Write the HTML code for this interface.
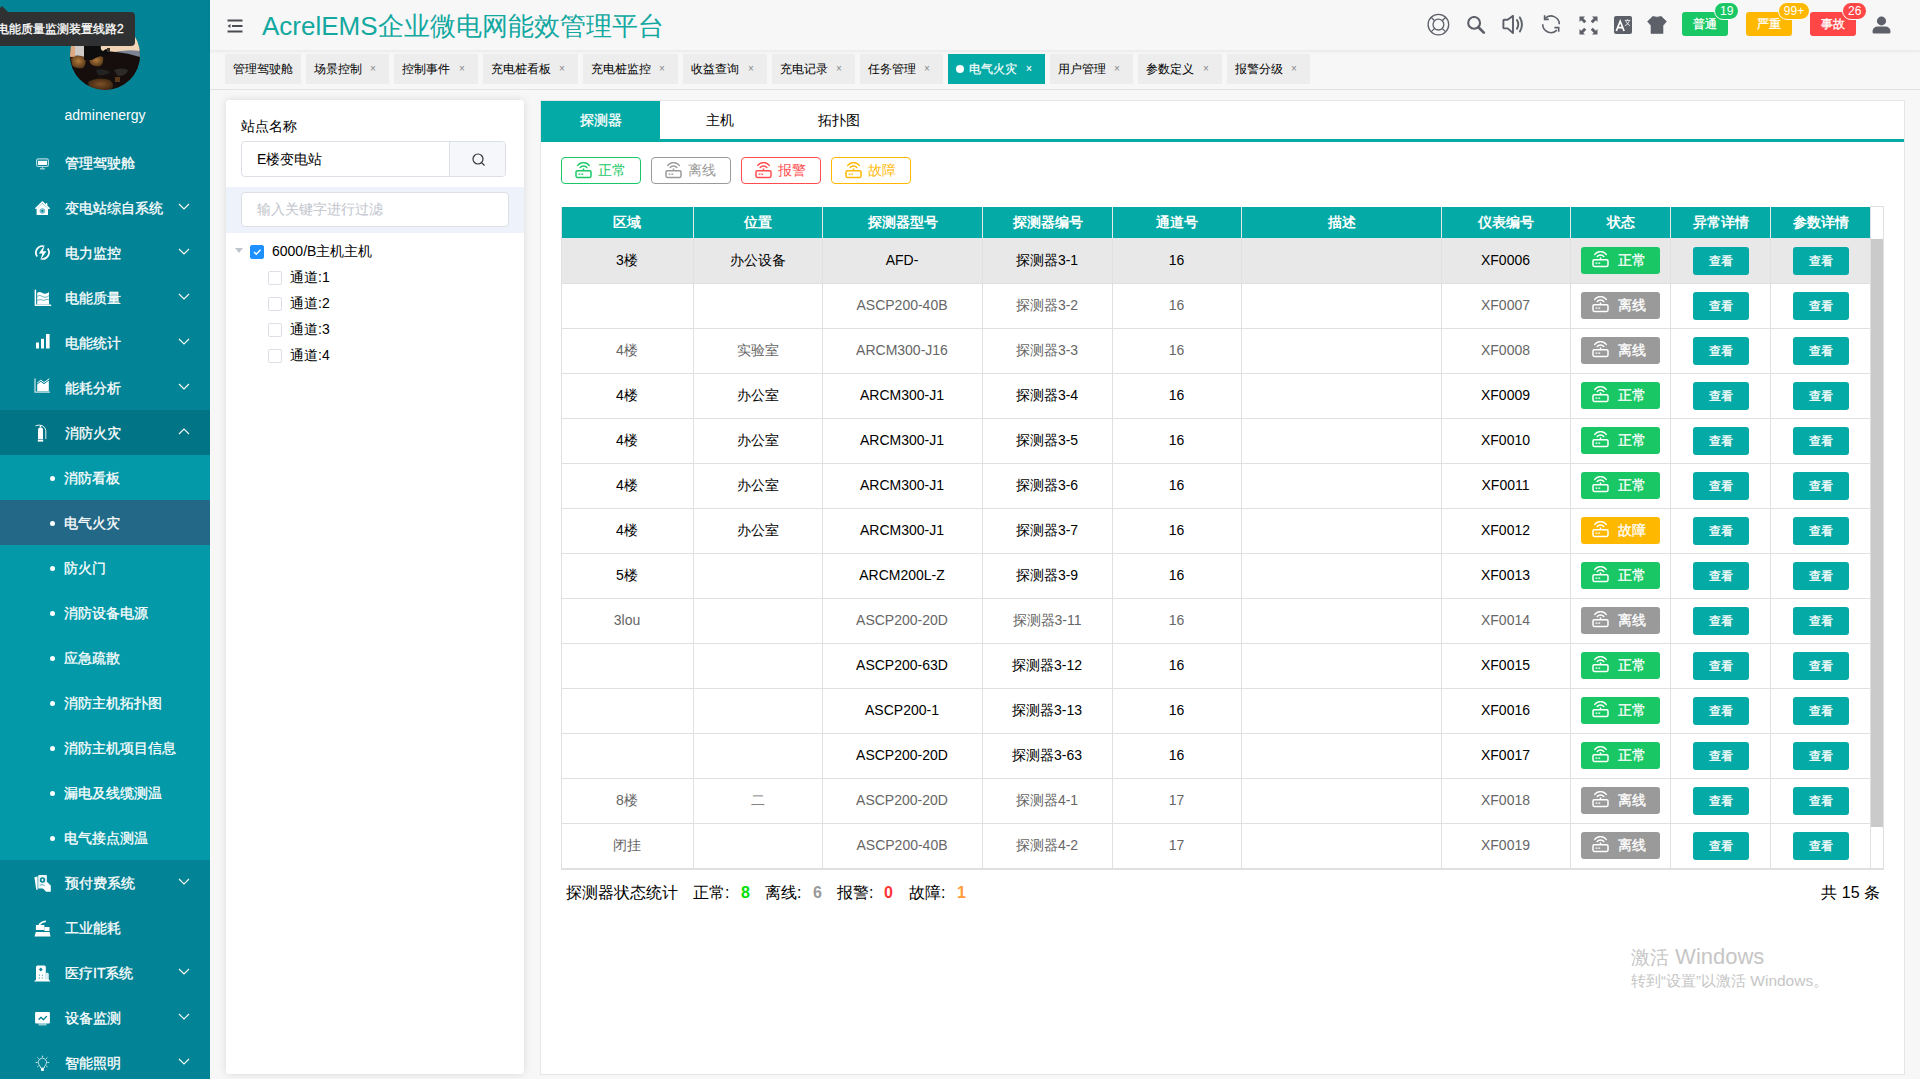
<!DOCTYPE html>
<html><head><meta charset="utf-8">
<style>
*{box-sizing:border-box;margin:0;padding:0}
html,body{width:1920px;height:1079px;overflow:hidden;background:#f7f7f7;font-family:"Liberation Sans",sans-serif;color:#000}
i{font-style:normal}
#side{position:absolute;left:0;top:0;width:210px;height:1079px;background:#028396;color:#fff;overflow:hidden}
.mi{position:absolute;left:0;width:210px;height:45px;line-height:45px;font-size:14px;color:#fff}
.mi .t{position:absolute;left:65px;top:1px;-webkit-text-stroke:0.3px #fff}
.mi .ic{position:absolute;left:34px;top:14px;width:17px;height:18px;line-height:0}
.mi .ic svg{overflow:visible}
.mi .chev{position:absolute;left:178px;top:18px}
.sub .t{left:64px}
.sub .dot{position:absolute;left:50px;top:21px;width:5px;height:5px;border-radius:50%;background:#fff}
#avatar{position:absolute;left:70px;top:20px;width:70px;height:70px;border-radius:50%;overflow:hidden;
 background:linear-gradient(180deg,#d9b89a 0%,#c59a7b 30%,#3a2a20 45%,#2a1e18 70%,#4a3322 100%)}
#uname{position:absolute;left:0;width:210px;top:106px;text-align:center;font-size:14px;line-height:18px;color:#fff}
#tip{position:absolute;left:0;top:12px;width:135px;height:34px;background:#303133;border-radius:0 4px 4px 0;color:#fff;font-size:12px;line-height:34px;white-space:nowrap;overflow:hidden;text-indent:-3px;-webkit-text-stroke:.3px #fff}
#tiparr{position:absolute;left:-4px;top:6px;width:0;height:0;border-left:6px solid transparent;border-right:6px solid transparent;border-bottom:6px solid #303133}

#hdr{position:absolute;left:210px;top:0;width:1710px;height:51px;background:#f7f7f7;border-bottom:1px solid #ececec;box-shadow:0 1px 3px rgba(0,0,0,.05);z-index:2}
#ham{position:absolute;left:17px;top:19px}
#title{position:absolute;left:52px;top:9px;font-size:26px;line-height:34px;color:#13a8a0;white-space:nowrap}
.hi{position:absolute;top:13px;line-height:0}
.bdg{position:absolute;top:12px;width:46px;height:24px;border-radius:3px;color:#fff;font-size:12px;line-height:24px;text-align:center;-webkit-text-stroke:.3px #fff}
.cnt{position:absolute;top:2px;height:18px;border-radius:9px;border:1px solid #fff;color:#fff;font-size:12px;line-height:16px;text-align:center;padding:0 5px}

#tabs{position:absolute;left:210px;top:50px;width:1710px;height:40px;background:#f7f7f7;border-bottom:1px solid #e2e2e2}
.tb{position:absolute;top:4px;height:30px;line-height:30px;background:#ededed;font-size:12px;color:#000;white-space:nowrap}
.tb .tt{position:absolute;top:0}
.tb .x{position:absolute;top:0;font-size:10px;color:#888}
.tb.on{background:#04aaa5;color:#fff;-webkit-text-stroke:.2px #fff}
.tb.on .x{color:#fff}
.tb .bd{position:absolute;left:8px;top:11px;width:8px;height:8px;border-radius:50%;background:#fff}

#lp{position:absolute;left:226px;top:100px;width:298px;height:974px;background:#fff;border-radius:3px;box-shadow:0 0 8px rgba(0,0,0,.12)}
#lp .lbl{position:absolute;left:15px;top:17px;font-size:14px;line-height:18px}
#lp .inp{position:absolute;left:15px;top:41px;width:265px;height:36px;border:1px solid #dcdfe6;border-radius:4px;overflow:hidden}
#lp .inp .v{position:absolute;left:15px;top:0;line-height:34px;font-size:14px;color:#000}
#lp .inp .btn{position:absolute;left:207px;top:0;width:58px;height:34px;background:#f5f7fa;border-left:1px solid #dcdfe6}
#lp .flt{position:absolute;left:0;top:87px;width:298px;height:46px;background:#eef3fb}
#lp .flt .fi{position:absolute;left:15px;top:5px;width:268px;height:35px;background:#fff;border:1px solid #dcdfe6;border-radius:4px;font-size:14px;line-height:33px;color:#c0c4cc;padding-left:15px}
.tree{position:absolute;font-size:14px;line-height:18px;white-space:nowrap}
.cb{position:absolute;width:14px;height:14px;border:1px solid #dcdfe6;border-radius:2px;background:#fff}

#rp{position:absolute;left:540px;top:100px;width:1365px;height:975px;background:#fff;border:1px solid #e6e6e6}
.rt{position:absolute;top:0;width:119px;height:38px;line-height:38px;text-align:center;font-size:14px;color:#000}
.rt.on{background:#04aaa5;color:#fff;-webkit-text-stroke:.3px #fff}
#rtline{position:absolute;left:0;top:38px;width:1363px;height:3px;background:#04aaa5}
.fb{position:absolute;top:56px;width:80px;height:27px;border:1px solid;border-radius:4px;font-size:14px;line-height:25px}
.fb svg{position:absolute;left:13px;top:4px}
.fb i{position:absolute;left:36px;top:0}

#tbl{position:absolute;left:20px;top:106px;width:1323px;height:663px;border:1px solid #e0e0e0;border-top:none;border-right:none;border-bottom:2px solid #e0e0e0}
#thd{position:absolute;left:0;top:0;width:1309px;height:31px;background:#04aaa5}
.th{position:absolute;top:0;height:31px;line-height:31px;text-align:center;color:#fff;font-size:14px;font-weight:bold;border-left:1px solid #e8e8e8}
.th:first-child{border-left:none}
.tr{position:absolute;left:0;width:1309px;height:45px;border-bottom:1px solid #e0e0e0}
.td{position:absolute;top:0;height:44px;line-height:44px;text-align:center;font-size:14px}
.vl{position:absolute;top:31px;width:1px;height:630px;background:#e0e0e0}
.sb{position:absolute;left:11px;top:9px;width:79px;height:27px;border-radius:3px;color:#fff;line-height:27px}
.sb svg{position:absolute;left:11px;top:4px}
.sb i{position:absolute;left:37px;top:0;-webkit-text-stroke:.3px #fff}
.vb{position:absolute;left:23px;top:9px;width:56px;height:28px;border-radius:3px;background:#04aaa5;color:#fff;font-size:12px;line-height:28px;-webkit-text-stroke:.3px #fff}
#sbar{position:absolute;left:1308px;top:-1px;width:14px;height:662px;border-top:1px solid #e0e0e0;border-left:1px solid #e0e0e0;border-right:1px solid #e0e0e0;background:#fff}
#thumb{position:absolute;left:0;top:32px;width:12px;height:588px;background:#cacaca}

.st{position:absolute;top:782px;font-size:16px;line-height:20px;white-space:nowrap}
.st.n{font-weight:bold}
#total{position:absolute;right:24px;top:782px;font-size:16px;line-height:20px}
#wm1{position:absolute;left:1090px;top:844px;font-size:22px;line-height:24px;color:#c6c6c6}
#wm2{position:absolute;left:1090px;top:870px;font-size:15.5px;line-height:20px;color:#c6c6c6}
</style></head><body>
<div id="side">
 <div id="avatar">
  <svg width="70" height="70" viewBox="0 0 70 70">
   <defs><linearGradient id="sky" x1="0" y1="0" x2="0" y2="1"><stop offset="0" stop-color="#f6e2c8"/><stop offset=".75" stop-color="#eec8a8"/><stop offset="1" stop-color="#b89890"/></linearGradient>
   <radialGradient id="o1" cx=".5" cy=".45" r=".55"><stop offset="0" stop-color="#b07a3a"/><stop offset="1" stop-color="#5a3a1c"/></radialGradient>
   <radialGradient id="o2" cx=".5" cy=".5" r=".6"><stop offset="0" stop-color="#7e5026"/><stop offset="1" stop-color="#3a2410"/></radialGradient></defs>
   <filter id="bl"><feGaussianBlur stdDeviation=".5"/></filter><g filter="url(#bl)"><rect x="-2" y="-2" width="74" height="74" fill="url(#sky)"/>
   <path d="M40 33 Q55 29 70 31 V38 H40Z" fill="#7c8494"/>
   <path d="M0 36 Q10 32 20 33 Q34 30 46 32 Q58 33 70 37 V72 H0Z" fill="#15110e"/>
   <path d="M1 38 Q8 33 15 37 Q17 44 13 48 Q5 49 2 45Z" fill="url(#o1)"/>
   <path d="M19 36 Q27 34 33 37 Q34 44 30 46 Q23 47 20 43Z" fill="url(#o1)"/>
   <path d="M18 62 Q28 56 40 60 Q46 66 40 70 H20Z" fill="url(#o2)"/>
   <path d="M44 50 Q52 47 58 50 Q56 56 48 56Z" fill="#2e2c2a"/>
   <path d="M26 50 Q34 48 40 52 Q36 56 28 55Z" fill="#242220"/>
   <rect x="45" y="57" width="5" height="5" fill="#6a4422" opacity=".8"/>
   <path d="M0 26 H15 V37 Q8 34 0 37Z" fill="#cfcac6"/>
   <path d="M0 26 H5 V37 H0Z" fill="#e0a070" opacity=".8"/>
   <path d="M14 26 H31 Q30 30 33 31 L36 29 L40 31 V34 Q30 35 22 40 H14Z" fill="#0f0d0b"/>
   <rect x="37" y="28" width="3" height="4" fill="#3a302a"/></g>
  </svg>
 </div>
 <div id="uname">adminenergy</div>
<div class="mi" style="top:140px;"><span class="ic"><svg width="17" height="17" viewBox="0 0 17 17"><rect x="2.6" y="4.9" width="11.8" height="7.6" rx="1.8" fill="none" stroke="#fff" stroke-width="1.2" opacity=".7"/><rect x="4" y="6.8" width="9" height="4.2" fill="#fff"/><rect x="6" y="14" width="4.8" height="1.5" fill="#fff" opacity=".6"/><rect x="8" y="13" width="1" height="1" fill="#fff" opacity=".6"/></svg></span><span class="t">管理驾驶舱</span></div>
<div class="mi" style="top:185px;"><span class="ic"><svg width="17" height="17" viewBox="0 0 17 17"><path d="M1.5 9.8 L8.4 3 L15.5 9.8" fill="none" stroke="#fff" stroke-width="1.6" stroke-linejoin="round"/><path d="M12 4 H13.3 V7.5 L12 6.3Z" fill="#fff"/><path d="M2.6 9.6 L8.4 4.6 L14 9.6 V16 H2.6Z" fill="#fff"/><circle cx="8.4" cy="12" r="2.8" fill="#028396" opacity=".55"/><circle cx="8.4" cy="12" r="1" fill="#028396"/></svg></span><span class="t">变电站综自系统</span><svg class="chev" width="12" height="7" viewBox="0 0 12 7"><path d="M1 1 L6 6 L11 1" fill="none" stroke="#fff" stroke-width="1.1"/></svg></div>
<div class="mi" style="top:230px;"><span class="ic"><svg width="17" height="17" viewBox="0 0 17 17"><path d="M9.6 2.1 A6.6 6.6 0 0 0 3.3 12.6 M7.4 14.9 A6.6 6.6 0 0 0 13.7 4.4" fill="none" stroke="#fff" stroke-width="1.7"/><path d="M10.8 0.8 L4.8 9.6 H8.4 L6.2 16.2 L12.4 7.3 H8.9 Z" fill="#fff"/></svg></span><span class="t">电力监控</span><svg class="chev" width="12" height="7" viewBox="0 0 12 7"><path d="M1 1 L6 6 L11 1" fill="none" stroke="#fff" stroke-width="1.1"/></svg></div>
<div class="mi" style="top:275px;"><span class="ic"><svg width="17" height="17" viewBox="0 0 17 17"><path d="M1.4 1.2 V16.2 H16.6" fill="none" stroke="#fff" stroke-width="1.5" stroke-linecap="round" stroke-linejoin="round"/><path d="M3.2 3.8 Q5.5 2.2 7.5 3.4 Q10 5 12 4.6 Q13.8 4.2 15 3 V15.4 H3.2Z" fill="#fff"/><path d="M3.2 7.3 Q5.5 5.8 7.5 7 Q10 8.6 12 8.2 Q13.8 7.8 15 6.6 M3.2 11.4 Q5.5 10.4 7.5 10.6 Q9.5 12.2 11 11 Q13 9.8 15 10.7" fill="none" stroke="#028396" stroke-width=".9" opacity=".65"/></svg></span><span class="t">电能质量</span><svg class="chev" width="12" height="7" viewBox="0 0 12 7"><path d="M1 1 L6 6 L11 1" fill="none" stroke="#fff" stroke-width="1.1"/></svg></div>
<div class="mi" style="top:320px;"><span class="ic"><svg width="16" height="16" viewBox="0 0 16 16"><rect x="2" y="8.5" width="3" height="6" fill="#fff"/><rect x="7" y="4.8" width="3" height="9.7" fill="#fff"/><rect x="12" y="0" width="3.6" height="14.5" fill="#fff"/></svg></span><span class="t">电能统计</span><svg class="chev" width="12" height="7" viewBox="0 0 12 7"><path d="M1 1 L6 6 L11 1" fill="none" stroke="#fff" stroke-width="1.1"/></svg></div>
<div class="mi" style="top:365px;"><span class="ic"><svg width="17" height="16" viewBox="0 0 17 16"><path d="M1 -0.5 V13.2 H16" fill="none" stroke="#fff" stroke-width="1.2" opacity=".8"/><path d="M3.2 12.3 V5.5 L6.8 2.8 L10 5.2 L14.8 1.5 V12.3Z" fill="#fff"/><path d="M3.2 4 L6.8 1.2 L10 3.6 L15.3 -0.3" fill="none" stroke="#fff" stroke-width="1"/></svg></span><span class="t">能耗分析</span><svg class="chev" width="12" height="7" viewBox="0 0 12 7"><path d="M1 1 L6 6 L11 1" fill="none" stroke="#fff" stroke-width="1.1"/></svg></div>
<div class="mi" style="top:410px;background:#017586;"><span class="ic"><svg width="14" height="18" viewBox="0 0 14 18"><path d="M1.5 1.8 Q5 0.5 8 1.5 Q11.5 3 11.8 6.5 V15" fill="none" stroke="#fff" stroke-width="0.9"/><path d="M6.5 1.5 V3" stroke="#fff" stroke-width="1.5"/><path d="M4 15.2 V6.5 Q4 3.3 6.5 3.3 Q9 3.3 9 6.5 V15.2Z" fill="#fff"/><rect x="3.8" y="15.8" width="5.4" height="1.8" fill="#fff"/></svg></span><span class="t">消防火灾</span><svg class="chev" width="12" height="7" viewBox="0 0 12 7"><path d="M1 6 L6 1 L11 6" fill="none" stroke="#fff" stroke-width="1.1"/></svg></div>
<div class="mi sub" style="top:455px;background:#0399a8"><span class="dot"></span><span class="t">消防看板</span></div>
<div class="mi sub" style="top:500px;background:#236886"><span class="dot"></span><span class="t">电气火灾</span></div>
<div class="mi sub" style="top:545px;background:#0399a8"><span class="dot"></span><span class="t">防火门</span></div>
<div class="mi sub" style="top:590px;background:#0399a8"><span class="dot"></span><span class="t">消防设备电源</span></div>
<div class="mi sub" style="top:635px;background:#0399a8"><span class="dot"></span><span class="t">应急疏散</span></div>
<div class="mi sub" style="top:680px;background:#0399a8"><span class="dot"></span><span class="t">消防主机拓扑图</span></div>
<div class="mi sub" style="top:725px;background:#0399a8"><span class="dot"></span><span class="t">消防主机项目信息</span></div>
<div class="mi sub" style="top:770px;background:#0399a8"><span class="dot"></span><span class="t">漏电及线缆测温</span></div>
<div class="mi sub" style="top:815px;background:#0399a8"><span class="dot"></span><span class="t">电气接点测温</span></div>
<div class="mi" style="top:860px;"><span class="ic"><svg width="17" height="18" viewBox="0 0 17 18"><path d="M0.4 3.2 L3.6 2.6 L3.6 16 L2.2 15.6Z" fill="#fff"/><path d="M4.2 1.4 Q4.5 1 5 1 H12.3 L12.9 1.6 V14.4 H4.2Z" fill="#fff" opacity=".92"/><circle cx="8.5" cy="6" r="2.7" fill="#028396"/><path d="M8.5 4.4 L9.1 5.4 L10.1 6 L9.1 6.6 L8.5 7.6 L7.9 6.6 L6.9 6 L7.9 5.4Z" fill="#fff"/><path d="M12.9 7.8 L16.8 11.6 V17.8 H12.2 L8 13.6" fill="#fff"/><path d="M5.8 11.3 Q8 9.6 10.8 11.6" fill="none" stroke="#028396" stroke-width=".8" opacity=".7"/></svg></span><span class="t">预付费系统</span><svg class="chev" width="12" height="7" viewBox="0 0 12 7"><path d="M1 1 L6 6 L11 1" fill="none" stroke="#fff" stroke-width="1.1"/></svg></div>
<div class="mi" style="top:905px;"><span class="ic"><svg width="17" height="18" viewBox="0 0 17 18"><path d="M5.5 5.4 Q8 2.6 11.3 2.4" fill="none" stroke="#fff" stroke-width="1.6" stroke-linecap="round"/><rect x="1.9" y="6" width="8.5" height="5" fill="#fff"/><rect x="10.4" y="8" width="5.1" height="4" fill="#fff"/><path d="M1.8 13 H15.6 L16.5 17.5 H0.5Z" fill="#fff"/></svg></span><span class="t">工业能耗</span></div>
<div class="mi" style="top:950px;"><span class="ic"><svg width="17" height="18" viewBox="0 0 17 18"><path d="M2 17 V3 Q2 1.5 3.5 1.5 H10.3 Q11.8 1.5 11.8 3 V17Z" fill="#fff"/><path d="M11.8 8.8 H13.3 Q14.8 8.8 14.8 10.3 V17 H11.8Z" fill="#fff" opacity=".85"/><path d="M0 17.5 L2 15.5 H14.8 L16.5 17.5Z" fill="#fff"/><path d="M6.8 3.6 L8.7 5.5 L6.8 7.4 L4.9 5.5Z" fill="#028396"/><g fill="#028396" opacity=".6"><circle cx="5.4" cy="11.3" r=".7"/><circle cx="8.5" cy="11.3" r=".7"/><circle cx="5.4" cy="14" r=".7"/><circle cx="8.5" cy="14" r=".7"/></g></svg></span><span class="t">医疗IT系统</span><svg class="chev" width="12" height="7" viewBox="0 0 12 7"><path d="M1 1 L6 6 L11 1" fill="none" stroke="#fff" stroke-width="1.1"/></svg></div>
<div class="mi" style="top:995px;"><span class="ic"><svg width="17" height="17" viewBox="0 0 17 17"><rect x="1.1" y="3" width="14.8" height="11.5" rx="1" fill="#fff"/><path d="M5 10.3 L7 8.3 L9.4 10.8 L12.5 7.4" fill="none" stroke="#028396" stroke-width="1.3" stroke-linecap="round" stroke-linejoin="round"/><rect x="4.5" y="14.5" width="8" height="2" fill="#fff" opacity=".6"/></svg></span><span class="t">设备监测</span><svg class="chev" width="12" height="7" viewBox="0 0 12 7"><path d="M1 1 L6 6 L11 1" fill="none" stroke="#fff" stroke-width="1.1"/></svg></div>
<div class="mi" style="top:1040px;"><span class="ic"><svg width="17" height="18" viewBox="0 0 17 18"><path d="M6.6 14 Q6.4 12 5 10.8 A4.2 4.2 0 1 1 11.8 10.8 Q10.4 12 10.2 14Z" fill="none" stroke="#fff" stroke-width="1" opacity=".75"/><path d="M7 14.2 H9.9 V16.4 Q8.5 17.6 7 16.4Z" fill="#fff"/><g stroke="#fff" stroke-width="1" stroke-linecap="round" opacity=".8"><path d="M8.4 2 V2.9"/><path d="M3.7 3.7 L4.4 4.4"/><path d="M13.1 3.7 L12.4 4.4"/><path d="M2 8.5 H3"/><path d="M13.8 8.5 H14.8"/><path d="M3.7 12.6 L4.4 12.2"/><path d="M13.1 12.6 L12.4 12.2"/></g></svg></span><span class="t">智能照明</span><svg class="chev" width="12" height="7" viewBox="0 0 12 7"><path d="M1 1 L6 6 L11 1" fill="none" stroke="#fff" stroke-width="1.1"/></svg></div>
 <div id="tiparr"></div><div id="tip">电能质量监测装置线路2</div>
</div>

<div id="hdr">
 <svg id="ham" width="16" height="14" viewBox="0 0 16 14"><rect x="0.5" y="0.5" width="15" height="2" fill="#4a4c52"/><rect x="5" y="6" width="10.5" height="2" fill="#4a4c52"/><rect x="0.5" y="11.5" width="15" height="2" fill="#4a4c52"/><path d="M0.5 7 L3.5 5 V9Z" fill="#4a4c52"/></svg>
 <div id="title">AcrelEMS企业微电网能效管理平台</div>
 <!-- icons -->
 <svg class="hi" style="left:1217px;top:13px" width="23" height="23" viewBox="0 0 23 23"><circle cx="11.4" cy="11.6" r="10.3" fill="none" stroke="#5d6069" stroke-width="1.3"/><circle cx="11.4" cy="11.6" r="5.4" fill="none" stroke="#5d6069" stroke-width="1.3"/><path d="M4.1 4.3 L7.6 7.8 M18.7 4.3 L15.2 7.8 M4.1 18.9 L7.6 15.4 M18.7 18.9 L15.2 15.4" stroke="#5d6069" stroke-width="1.3"/></svg>
 <svg class="hi" style="left:1257px;top:16px" width="19" height="19" viewBox="0 0 19 19"><circle cx="7.1" cy="6.9" r="5.9" fill="none" stroke="#5d6069" stroke-width="2.1"/><path d="M11.4 11.3 L16.8 16.6" stroke="#5d6069" stroke-width="2.7" stroke-linecap="round"/></svg>
 <svg class="hi" style="left:1292px;top:15px" width="23" height="20" viewBox="0 0 23 20"><path d="M1.4 5.4 Q1.4 4.7 2.1 4.7 H5.6 L11 0.9 V18 L5.6 13.4 H2.1 Q1.4 13.4 1.4 12.7Z" fill="none" stroke="#5d6069" stroke-width="1.9" stroke-linejoin="round"/><path d="M15 5 Q17.6 9.3 15 13.8 M17.9 2.4 Q22 9.4 17.9 16.4" fill="none" stroke="#5d6069" stroke-width="1.9" stroke-linecap="round"/></svg>
 <svg class="hi" style="left:1331px;top:14px" width="21" height="20" viewBox="0 0 21 20"><path d="M4.13 4.43 A8.3 8.3 0 0 1 18.3 10.3 M1.7 10.3 A8.3 8.3 0 0 0 15.87 16.17" fill="none" stroke="#5d6069" stroke-width="1.6"/><path d="M3.6 1.2 V5.4 H7.8 M13.4 13.6 H17.7 V17.8" fill="none" stroke="#5d6069" stroke-width="1.6"/></svg>
 <svg class="hi" style="left:1369px;top:16px" width="19" height="19" viewBox="0 0 19 19"><g fill="#5d6069"><path d="M0.5 0.5 H6 L4.3 2.2 L7.3 5.2 L5.2 7.3 L2.2 4.3 L0.5 6Z"/><path d="M18.5 0.5 H13 L14.7 2.2 L11.7 5.2 L13.8 7.3 L16.8 4.3 L18.5 6Z"/><path d="M0.5 18.5 H6 L4.3 16.8 L7.3 13.8 L5.2 11.7 L2.2 14.7 L0.5 13Z"/><path d="M18.5 18.5 H13 L14.7 16.8 L11.7 13.8 L13.8 11.7 L16.8 14.7 L18.5 13Z"/></g></svg>
 <svg class="hi" style="left:1404px;top:16px" width="18" height="18" viewBox="0 0 18 18"><rect width="18" height="18" rx="2" fill="#5d6069"/><path d="M2.3 15 L6.2 5.3 L10.1 15 M3.9 11.6 H8.5" fill="none" stroke="#fff" stroke-width="1.7"/><path d="M10.8 4.4 H16.3 M13.5 3.2 V4.4 M11.6 4.4 Q13 8.6 16.2 9.8 M15.5 4.4 Q14.3 8.6 10.9 9.8" fill="none" stroke="#fff" stroke-width=".75"/></svg>
 <svg class="hi" style="left:1437px;top:16px" width="20" height="18" viewBox="0 0 20 18"><path d="M6 0.2 Q10 2.2 14 0.2 L19.5 5.5 L16 9.5 V17.5 H4 V9.5 L0.5 5.5Z" fill="#5d6069" stroke="#5d6069" stroke-width=".6" stroke-linejoin="round"/></svg>
 <div class="bdg" style="left:1472px;background:#19c864">普通</div>
 <div class="cnt" style="left:1504px;background:#19c864;width:25px">19</div>
 <div class="bdg" style="left:1536px;background:#ffb800">严重</div>
 <div class="cnt" style="left:1568px;background:#ffb800;width:32px;padding:0">99+</div>
 <div class="bdg" style="left:1600px;background:#ff4747">事故</div>
 <div class="cnt" style="left:1632px;background:#ff4747;width:25px">26</div>
 <svg class="hi" style="left:1662px;top:16px" width="19" height="18" viewBox="0 0 19 18"><ellipse cx="9.5" cy="5" rx="4.6" ry="4.4" fill="#5d6069"/><path d="M0.5 16 Q0.5 10.5 6 10.5 H13 Q18.5 10.5 18.5 16 Q18.5 17.5 17 17.5 H2 Q0.5 17.5 0.5 16Z" fill="#5d6069"/></svg>
</div>

<div id="tabs">
<div class="tb" style="left:15px;width:76px"><span class="tt" style="left:8px">管理驾驶舱</span></div>
<div class="tb" style="left:96px;width:83px"><span class="tt" style="left:8px">场景控制</span><span class="x" style="left:64px">×</span></div>
<div class="tb" style="left:184px;width:84px"><span class="tt" style="left:8px">控制事件</span><span class="x" style="left:65px">×</span></div>
<div class="tb" style="left:273px;width:95px"><span class="tt" style="left:8px">充电桩看板</span><span class="x" style="left:76px">×</span></div>
<div class="tb" style="left:373px;width:95px"><span class="tt" style="left:8px">充电桩监控</span><span class="x" style="left:76px">×</span></div>
<div class="tb" style="left:473px;width:84px"><span class="tt" style="left:8px">收益查询</span><span class="x" style="left:65px">×</span></div>
<div class="tb" style="left:562px;width:83px"><span class="tt" style="left:8px">充电记录</span><span class="x" style="left:64px">×</span></div>
<div class="tb" style="left:650px;width:83px"><span class="tt" style="left:8px">任务管理</span><span class="x" style="left:64px">×</span></div>
<div class="tb on" style="left:738px;width:97px"><span class="bd"></span><span class="tt" style="left:21px">电气火灾</span><span class="x" style="left:78px">×</span></div>
<div class="tb" style="left:840px;width:83px"><span class="tt" style="left:8px">用户管理</span><span class="x" style="left:64px">×</span></div>
<div class="tb" style="left:928px;width:84px"><span class="tt" style="left:8px">参数定义</span><span class="x" style="left:65px">×</span></div>
<div class="tb" style="left:1017px;width:83px"><span class="tt" style="left:8px">报警分级</span><span class="x" style="left:64px">×</span></div>
</div>

<div id="lp">
 <div class="lbl">站点名称</div>
 <div class="inp"><span class="v">E楼变电站</span><span class="btn"><svg style="position:absolute;left:22px;top:11px" width="14" height="14" viewBox="0 0 14 14"><circle cx="6" cy="6" r="5" fill="none" stroke="#333" stroke-width="1.2"/><path d="M9.6 9.6 L12.5 12.5" stroke="#333" stroke-width="1.2"/></svg></span></div>
 <div class="flt"><div class="fi">输入关键字进行过滤</div></div>
 <svg style="position:absolute;left:8px;top:147px" width="10" height="7" viewBox="0 0 10 7"><path d="M1 1 H9 L5 6Z" fill="#c0c4cc"/></svg>
 <div class="cb" style="left:24px;top:145px;background:#1e90ff;border-color:#1e90ff"><svg style="position:absolute;left:1px;top:1px" width="10" height="10" viewBox="0 0 10 10"><path d="M2 5 L4.3 7.3 L8.5 2.8" fill="none" stroke="#fff" stroke-width="1.4"/></svg></div>
 <div class="tree" style="left:46px;top:142px">6000/B主机主机</div>
 <div class="cb" style="left:42px;top:171px"></div><div class="tree" style="left:64px;top:168px">通道:1</div>
 <div class="cb" style="left:42px;top:197px"></div><div class="tree" style="left:64px;top:194px">通道:2</div>
 <div class="cb" style="left:42px;top:223px"></div><div class="tree" style="left:64px;top:220px">通道:3</div>
 <div class="cb" style="left:42px;top:249px"></div><div class="tree" style="left:64px;top:246px">通道:4</div>
</div>

<div id="rp">
 <div class="rt on" style="left:0">探测器</div>
 <div class="rt" style="left:119px">主机</div>
 <div class="rt" style="left:238px">拓扑图</div>
 <div id="rtline"></div>
 <div class="fb" style="left:20px;border-color:#19c864;color:#19c864"><svg width="17" height="17" viewBox="0 0 17 17"><path d="M2.75 3.4 A7.3 7.3 0 0 1 14.25 3.4" fill="none" stroke="#19c864" stroke-width="1.5" stroke-linecap="round"/><path d="M5.2 5.5 A4.3 4.3 0 0 1 11.8 5.5" fill="none" stroke="#19c864" stroke-width="1.5" stroke-linecap="round"/><path d="M8.5 6.5 V9" stroke="#19c864" stroke-width="1.5"/><rect x="1" y="8.8" width="15" height="6.6" rx="1.3" fill="none" stroke="#19c864" stroke-width="1.5"/><rect x="3.6" y="11.5" width="1.8" height="1.3" fill="#19c864"/><rect x="6.4" y="11.5" width="1.8" height="1.3" fill="#19c864"/></svg><i>正常</i></div>
 <div class="fb" style="left:110px;border-color:#9a9a9a;color:#9a9a9a"><svg width="17" height="17" viewBox="0 0 17 17"><path d="M2.75 3.4 A7.3 7.3 0 0 1 14.25 3.4" fill="none" stroke="#9a9a9a" stroke-width="1.5" stroke-linecap="round"/><path d="M5.2 5.5 A4.3 4.3 0 0 1 11.8 5.5" fill="none" stroke="#9a9a9a" stroke-width="1.5" stroke-linecap="round"/><path d="M8.5 6.5 V9" stroke="#9a9a9a" stroke-width="1.5"/><rect x="1" y="8.8" width="15" height="6.6" rx="1.3" fill="none" stroke="#9a9a9a" stroke-width="1.5"/><rect x="3.6" y="11.5" width="1.8" height="1.3" fill="#9a9a9a"/><rect x="6.4" y="11.5" width="1.8" height="1.3" fill="#9a9a9a"/></svg><i>离线</i></div>
 <div class="fb" style="left:200px;border-color:#ff4d4f;color:#ff4d4f"><svg width="17" height="17" viewBox="0 0 17 17"><path d="M2.75 3.4 A7.3 7.3 0 0 1 14.25 3.4" fill="none" stroke="#ff4d4f" stroke-width="1.5" stroke-linecap="round"/><path d="M5.2 5.5 A4.3 4.3 0 0 1 11.8 5.5" fill="none" stroke="#ff4d4f" stroke-width="1.5" stroke-linecap="round"/><path d="M8.5 6.5 V9" stroke="#ff4d4f" stroke-width="1.5"/><rect x="1" y="8.8" width="15" height="6.6" rx="1.3" fill="none" stroke="#ff4d4f" stroke-width="1.5"/><rect x="3.6" y="11.5" width="1.8" height="1.3" fill="#ff4d4f"/><rect x="6.4" y="11.5" width="1.8" height="1.3" fill="#ff4d4f"/></svg><i>报警</i></div>
 <div class="fb" style="left:290px;border-color:#ffb800;color:#ffb800"><svg width="17" height="17" viewBox="0 0 17 17"><path d="M2.75 3.4 A7.3 7.3 0 0 1 14.25 3.4" fill="none" stroke="#ffb800" stroke-width="1.5" stroke-linecap="round"/><path d="M5.2 5.5 A4.3 4.3 0 0 1 11.8 5.5" fill="none" stroke="#ffb800" stroke-width="1.5" stroke-linecap="round"/><path d="M8.5 6.5 V9" stroke="#ffb800" stroke-width="1.5"/><rect x="1" y="8.8" width="15" height="6.6" rx="1.3" fill="none" stroke="#ffb800" stroke-width="1.5"/><rect x="3.6" y="11.5" width="1.8" height="1.3" fill="#ffb800"/><rect x="6.4" y="11.5" width="1.8" height="1.3" fill="#ffb800"/></svg><i>故障</i></div>

 <div id="tbl">
  <div id="thd">
<div class="th" style="left:-1px;width:132px">区域</div>
<div class="th" style="left:131px;width:129px">位置</div>
<div class="th" style="left:260px;width:160px">探测器型号</div>
<div class="th" style="left:420px;width:130px">探测器编号</div>
<div class="th" style="left:550px;width:129px">通道号</div>
<div class="th" style="left:679px;width:200px">描述</div>
<div class="th" style="left:879px;width:129px">仪表编号</div>
<div class="th" style="left:1008px;width:100px">状态</div>
<div class="th" style="left:1108px;width:100px">异常详情</div>
<div class="th" style="left:1208px;width:100px">参数详情</div>
  </div>
<div class="tr" style="top:31px;height:46px;background:#e8e8e8;color:#000"><div class="td" style="left:-1px;width:132px">3楼</div><div class="td" style="left:131px;width:129px">办公设备</div><div class="td" style="left:260px;width:160px">AFD-</div><div class="td" style="left:420px;width:130px">探测器3-1</div><div class="td" style="left:550px;width:129px">16</div><div class="td" style="left:679px;width:200px"></div><div class="td" style="left:879px;width:129px">XF0006</div><div class="td" style="left:1008px;width:100px"><span class="sb" style="background:#19c864"><svg width="17" height="17" viewBox="0 0 17 17"><path d="M2.75 3.4 A7.3 7.3 0 0 1 14.25 3.4" fill="none" stroke="#fff" stroke-width="1.5" stroke-linecap="round"/><path d="M5.2 5.5 A4.3 4.3 0 0 1 11.8 5.5" fill="none" stroke="#fff" stroke-width="1.5" stroke-linecap="round"/><path d="M8.5 6.5 V9" stroke="#fff" stroke-width="1.5"/><rect x="1" y="8.8" width="15" height="6.6" rx="1.3" fill="none" stroke="#fff" stroke-width="1.5"/><rect x="3.6" y="11.5" width="1.8" height="1.3" fill="#fff"/><rect x="6.4" y="11.5" width="1.8" height="1.3" fill="#fff"/></svg><i>正常</i></span></div><div class="td" style="left:1108px;width:100px"><span class="vb">查看</span></div><div class="td" style="left:1208px;width:100px"><span class="vb">查看</span></div></div>
<div class="tr" style="top:77px;height:45px;color:#666"><div class="td" style="top:-1px;left:-1px;width:132px"></div><div class="td" style="top:-1px;left:131px;width:129px"></div><div class="td" style="top:-1px;left:260px;width:160px">ASCP200-40B</div><div class="td" style="top:-1px;left:420px;width:130px">探测器3-2</div><div class="td" style="top:-1px;left:550px;width:129px">16</div><div class="td" style="top:-1px;left:679px;width:200px"></div><div class="td" style="top:-1px;left:879px;width:129px">XF0007</div><div class="td" style="top:-1px;left:1008px;width:100px"><span class="sb" style="background:#9a9a9a"><svg width="17" height="17" viewBox="0 0 17 17"><path d="M2.75 3.4 A7.3 7.3 0 0 1 14.25 3.4" fill="none" stroke="#fff" stroke-width="1.5" stroke-linecap="round"/><path d="M5.2 5.5 A4.3 4.3 0 0 1 11.8 5.5" fill="none" stroke="#fff" stroke-width="1.5" stroke-linecap="round"/><path d="M8.5 6.5 V9" stroke="#fff" stroke-width="1.5"/><rect x="1" y="8.8" width="15" height="6.6" rx="1.3" fill="none" stroke="#fff" stroke-width="1.5"/><rect x="3.6" y="11.5" width="1.8" height="1.3" fill="#fff"/><rect x="6.4" y="11.5" width="1.8" height="1.3" fill="#fff"/></svg><i>离线</i></span></div><div class="td" style="top:-1px;left:1108px;width:100px"><span class="vb">查看</span></div><div class="td" style="top:-1px;left:1208px;width:100px"><span class="vb">查看</span></div></div>
<div class="tr" style="top:122px;height:45px;color:#666"><div class="td" style="top:-1px;left:-1px;width:132px">4楼</div><div class="td" style="top:-1px;left:131px;width:129px">实验室</div><div class="td" style="top:-1px;left:260px;width:160px">ARCM300-J16</div><div class="td" style="top:-1px;left:420px;width:130px">探测器3-3</div><div class="td" style="top:-1px;left:550px;width:129px">16</div><div class="td" style="top:-1px;left:679px;width:200px"></div><div class="td" style="top:-1px;left:879px;width:129px">XF0008</div><div class="td" style="top:-1px;left:1008px;width:100px"><span class="sb" style="background:#9a9a9a"><svg width="17" height="17" viewBox="0 0 17 17"><path d="M2.75 3.4 A7.3 7.3 0 0 1 14.25 3.4" fill="none" stroke="#fff" stroke-width="1.5" stroke-linecap="round"/><path d="M5.2 5.5 A4.3 4.3 0 0 1 11.8 5.5" fill="none" stroke="#fff" stroke-width="1.5" stroke-linecap="round"/><path d="M8.5 6.5 V9" stroke="#fff" stroke-width="1.5"/><rect x="1" y="8.8" width="15" height="6.6" rx="1.3" fill="none" stroke="#fff" stroke-width="1.5"/><rect x="3.6" y="11.5" width="1.8" height="1.3" fill="#fff"/><rect x="6.4" y="11.5" width="1.8" height="1.3" fill="#fff"/></svg><i>离线</i></span></div><div class="td" style="top:-1px;left:1108px;width:100px"><span class="vb">查看</span></div><div class="td" style="top:-1px;left:1208px;width:100px"><span class="vb">查看</span></div></div>
<div class="tr" style="top:167px;height:45px;color:#000"><div class="td" style="top:-1px;left:-1px;width:132px">4楼</div><div class="td" style="top:-1px;left:131px;width:129px">办公室</div><div class="td" style="top:-1px;left:260px;width:160px">ARCM300-J1</div><div class="td" style="top:-1px;left:420px;width:130px">探测器3-4</div><div class="td" style="top:-1px;left:550px;width:129px">16</div><div class="td" style="top:-1px;left:679px;width:200px"></div><div class="td" style="top:-1px;left:879px;width:129px">XF0009</div><div class="td" style="top:-1px;left:1008px;width:100px"><span class="sb" style="background:#19c864"><svg width="17" height="17" viewBox="0 0 17 17"><path d="M2.75 3.4 A7.3 7.3 0 0 1 14.25 3.4" fill="none" stroke="#fff" stroke-width="1.5" stroke-linecap="round"/><path d="M5.2 5.5 A4.3 4.3 0 0 1 11.8 5.5" fill="none" stroke="#fff" stroke-width="1.5" stroke-linecap="round"/><path d="M8.5 6.5 V9" stroke="#fff" stroke-width="1.5"/><rect x="1" y="8.8" width="15" height="6.6" rx="1.3" fill="none" stroke="#fff" stroke-width="1.5"/><rect x="3.6" y="11.5" width="1.8" height="1.3" fill="#fff"/><rect x="6.4" y="11.5" width="1.8" height="1.3" fill="#fff"/></svg><i>正常</i></span></div><div class="td" style="top:-1px;left:1108px;width:100px"><span class="vb">查看</span></div><div class="td" style="top:-1px;left:1208px;width:100px"><span class="vb">查看</span></div></div>
<div class="tr" style="top:212px;height:45px;color:#000"><div class="td" style="top:-1px;left:-1px;width:132px">4楼</div><div class="td" style="top:-1px;left:131px;width:129px">办公室</div><div class="td" style="top:-1px;left:260px;width:160px">ARCM300-J1</div><div class="td" style="top:-1px;left:420px;width:130px">探测器3-5</div><div class="td" style="top:-1px;left:550px;width:129px">16</div><div class="td" style="top:-1px;left:679px;width:200px"></div><div class="td" style="top:-1px;left:879px;width:129px">XF0010</div><div class="td" style="top:-1px;left:1008px;width:100px"><span class="sb" style="background:#19c864"><svg width="17" height="17" viewBox="0 0 17 17"><path d="M2.75 3.4 A7.3 7.3 0 0 1 14.25 3.4" fill="none" stroke="#fff" stroke-width="1.5" stroke-linecap="round"/><path d="M5.2 5.5 A4.3 4.3 0 0 1 11.8 5.5" fill="none" stroke="#fff" stroke-width="1.5" stroke-linecap="round"/><path d="M8.5 6.5 V9" stroke="#fff" stroke-width="1.5"/><rect x="1" y="8.8" width="15" height="6.6" rx="1.3" fill="none" stroke="#fff" stroke-width="1.5"/><rect x="3.6" y="11.5" width="1.8" height="1.3" fill="#fff"/><rect x="6.4" y="11.5" width="1.8" height="1.3" fill="#fff"/></svg><i>正常</i></span></div><div class="td" style="top:-1px;left:1108px;width:100px"><span class="vb">查看</span></div><div class="td" style="top:-1px;left:1208px;width:100px"><span class="vb">查看</span></div></div>
<div class="tr" style="top:257px;height:45px;color:#000"><div class="td" style="top:-1px;left:-1px;width:132px">4楼</div><div class="td" style="top:-1px;left:131px;width:129px">办公室</div><div class="td" style="top:-1px;left:260px;width:160px">ARCM300-J1</div><div class="td" style="top:-1px;left:420px;width:130px">探测器3-6</div><div class="td" style="top:-1px;left:550px;width:129px">16</div><div class="td" style="top:-1px;left:679px;width:200px"></div><div class="td" style="top:-1px;left:879px;width:129px">XF0011</div><div class="td" style="top:-1px;left:1008px;width:100px"><span class="sb" style="background:#19c864"><svg width="17" height="17" viewBox="0 0 17 17"><path d="M2.75 3.4 A7.3 7.3 0 0 1 14.25 3.4" fill="none" stroke="#fff" stroke-width="1.5" stroke-linecap="round"/><path d="M5.2 5.5 A4.3 4.3 0 0 1 11.8 5.5" fill="none" stroke="#fff" stroke-width="1.5" stroke-linecap="round"/><path d="M8.5 6.5 V9" stroke="#fff" stroke-width="1.5"/><rect x="1" y="8.8" width="15" height="6.6" rx="1.3" fill="none" stroke="#fff" stroke-width="1.5"/><rect x="3.6" y="11.5" width="1.8" height="1.3" fill="#fff"/><rect x="6.4" y="11.5" width="1.8" height="1.3" fill="#fff"/></svg><i>正常</i></span></div><div class="td" style="top:-1px;left:1108px;width:100px"><span class="vb">查看</span></div><div class="td" style="top:-1px;left:1208px;width:100px"><span class="vb">查看</span></div></div>
<div class="tr" style="top:302px;height:45px;color:#000"><div class="td" style="top:-1px;left:-1px;width:132px">4楼</div><div class="td" style="top:-1px;left:131px;width:129px">办公室</div><div class="td" style="top:-1px;left:260px;width:160px">ARCM300-J1</div><div class="td" style="top:-1px;left:420px;width:130px">探测器3-7</div><div class="td" style="top:-1px;left:550px;width:129px">16</div><div class="td" style="top:-1px;left:679px;width:200px"></div><div class="td" style="top:-1px;left:879px;width:129px">XF0012</div><div class="td" style="top:-1px;left:1008px;width:100px"><span class="sb" style="background:#ffb800"><svg width="17" height="17" viewBox="0 0 17 17"><path d="M2.75 3.4 A7.3 7.3 0 0 1 14.25 3.4" fill="none" stroke="#fff" stroke-width="1.5" stroke-linecap="round"/><path d="M5.2 5.5 A4.3 4.3 0 0 1 11.8 5.5" fill="none" stroke="#fff" stroke-width="1.5" stroke-linecap="round"/><path d="M8.5 6.5 V9" stroke="#fff" stroke-width="1.5"/><rect x="1" y="8.8" width="15" height="6.6" rx="1.3" fill="none" stroke="#fff" stroke-width="1.5"/><rect x="3.6" y="11.5" width="1.8" height="1.3" fill="#fff"/><rect x="6.4" y="11.5" width="1.8" height="1.3" fill="#fff"/></svg><i>故障</i></span></div><div class="td" style="top:-1px;left:1108px;width:100px"><span class="vb">查看</span></div><div class="td" style="top:-1px;left:1208px;width:100px"><span class="vb">查看</span></div></div>
<div class="tr" style="top:347px;height:45px;color:#000"><div class="td" style="top:-1px;left:-1px;width:132px">5楼</div><div class="td" style="top:-1px;left:131px;width:129px"></div><div class="td" style="top:-1px;left:260px;width:160px">ARCM200L-Z</div><div class="td" style="top:-1px;left:420px;width:130px">探测器3-9</div><div class="td" style="top:-1px;left:550px;width:129px">16</div><div class="td" style="top:-1px;left:679px;width:200px"></div><div class="td" style="top:-1px;left:879px;width:129px">XF0013</div><div class="td" style="top:-1px;left:1008px;width:100px"><span class="sb" style="background:#19c864"><svg width="17" height="17" viewBox="0 0 17 17"><path d="M2.75 3.4 A7.3 7.3 0 0 1 14.25 3.4" fill="none" stroke="#fff" stroke-width="1.5" stroke-linecap="round"/><path d="M5.2 5.5 A4.3 4.3 0 0 1 11.8 5.5" fill="none" stroke="#fff" stroke-width="1.5" stroke-linecap="round"/><path d="M8.5 6.5 V9" stroke="#fff" stroke-width="1.5"/><rect x="1" y="8.8" width="15" height="6.6" rx="1.3" fill="none" stroke="#fff" stroke-width="1.5"/><rect x="3.6" y="11.5" width="1.8" height="1.3" fill="#fff"/><rect x="6.4" y="11.5" width="1.8" height="1.3" fill="#fff"/></svg><i>正常</i></span></div><div class="td" style="top:-1px;left:1108px;width:100px"><span class="vb">查看</span></div><div class="td" style="top:-1px;left:1208px;width:100px"><span class="vb">查看</span></div></div>
<div class="tr" style="top:392px;height:45px;color:#666"><div class="td" style="top:-1px;left:-1px;width:132px">3lou</div><div class="td" style="top:-1px;left:131px;width:129px"></div><div class="td" style="top:-1px;left:260px;width:160px">ASCP200-20D</div><div class="td" style="top:-1px;left:420px;width:130px">探测器3-11</div><div class="td" style="top:-1px;left:550px;width:129px">16</div><div class="td" style="top:-1px;left:679px;width:200px"></div><div class="td" style="top:-1px;left:879px;width:129px">XF0014</div><div class="td" style="top:-1px;left:1008px;width:100px"><span class="sb" style="background:#9a9a9a"><svg width="17" height="17" viewBox="0 0 17 17"><path d="M2.75 3.4 A7.3 7.3 0 0 1 14.25 3.4" fill="none" stroke="#fff" stroke-width="1.5" stroke-linecap="round"/><path d="M5.2 5.5 A4.3 4.3 0 0 1 11.8 5.5" fill="none" stroke="#fff" stroke-width="1.5" stroke-linecap="round"/><path d="M8.5 6.5 V9" stroke="#fff" stroke-width="1.5"/><rect x="1" y="8.8" width="15" height="6.6" rx="1.3" fill="none" stroke="#fff" stroke-width="1.5"/><rect x="3.6" y="11.5" width="1.8" height="1.3" fill="#fff"/><rect x="6.4" y="11.5" width="1.8" height="1.3" fill="#fff"/></svg><i>离线</i></span></div><div class="td" style="top:-1px;left:1108px;width:100px"><span class="vb">查看</span></div><div class="td" style="top:-1px;left:1208px;width:100px"><span class="vb">查看</span></div></div>
<div class="tr" style="top:437px;height:45px;color:#000"><div class="td" style="top:-1px;left:-1px;width:132px"></div><div class="td" style="top:-1px;left:131px;width:129px"></div><div class="td" style="top:-1px;left:260px;width:160px">ASCP200-63D</div><div class="td" style="top:-1px;left:420px;width:130px">探测器3-12</div><div class="td" style="top:-1px;left:550px;width:129px">16</div><div class="td" style="top:-1px;left:679px;width:200px"></div><div class="td" style="top:-1px;left:879px;width:129px">XF0015</div><div class="td" style="top:-1px;left:1008px;width:100px"><span class="sb" style="background:#19c864"><svg width="17" height="17" viewBox="0 0 17 17"><path d="M2.75 3.4 A7.3 7.3 0 0 1 14.25 3.4" fill="none" stroke="#fff" stroke-width="1.5" stroke-linecap="round"/><path d="M5.2 5.5 A4.3 4.3 0 0 1 11.8 5.5" fill="none" stroke="#fff" stroke-width="1.5" stroke-linecap="round"/><path d="M8.5 6.5 V9" stroke="#fff" stroke-width="1.5"/><rect x="1" y="8.8" width="15" height="6.6" rx="1.3" fill="none" stroke="#fff" stroke-width="1.5"/><rect x="3.6" y="11.5" width="1.8" height="1.3" fill="#fff"/><rect x="6.4" y="11.5" width="1.8" height="1.3" fill="#fff"/></svg><i>正常</i></span></div><div class="td" style="top:-1px;left:1108px;width:100px"><span class="vb">查看</span></div><div class="td" style="top:-1px;left:1208px;width:100px"><span class="vb">查看</span></div></div>
<div class="tr" style="top:482px;height:45px;color:#000"><div class="td" style="top:-1px;left:-1px;width:132px"></div><div class="td" style="top:-1px;left:131px;width:129px"></div><div class="td" style="top:-1px;left:260px;width:160px">ASCP200-1</div><div class="td" style="top:-1px;left:420px;width:130px">探测器3-13</div><div class="td" style="top:-1px;left:550px;width:129px">16</div><div class="td" style="top:-1px;left:679px;width:200px"></div><div class="td" style="top:-1px;left:879px;width:129px">XF0016</div><div class="td" style="top:-1px;left:1008px;width:100px"><span class="sb" style="background:#19c864"><svg width="17" height="17" viewBox="0 0 17 17"><path d="M2.75 3.4 A7.3 7.3 0 0 1 14.25 3.4" fill="none" stroke="#fff" stroke-width="1.5" stroke-linecap="round"/><path d="M5.2 5.5 A4.3 4.3 0 0 1 11.8 5.5" fill="none" stroke="#fff" stroke-width="1.5" stroke-linecap="round"/><path d="M8.5 6.5 V9" stroke="#fff" stroke-width="1.5"/><rect x="1" y="8.8" width="15" height="6.6" rx="1.3" fill="none" stroke="#fff" stroke-width="1.5"/><rect x="3.6" y="11.5" width="1.8" height="1.3" fill="#fff"/><rect x="6.4" y="11.5" width="1.8" height="1.3" fill="#fff"/></svg><i>正常</i></span></div><div class="td" style="top:-1px;left:1108px;width:100px"><span class="vb">查看</span></div><div class="td" style="top:-1px;left:1208px;width:100px"><span class="vb">查看</span></div></div>
<div class="tr" style="top:527px;height:45px;color:#000"><div class="td" style="top:-1px;left:-1px;width:132px"></div><div class="td" style="top:-1px;left:131px;width:129px"></div><div class="td" style="top:-1px;left:260px;width:160px">ASCP200-20D</div><div class="td" style="top:-1px;left:420px;width:130px">探测器3-63</div><div class="td" style="top:-1px;left:550px;width:129px">16</div><div class="td" style="top:-1px;left:679px;width:200px"></div><div class="td" style="top:-1px;left:879px;width:129px">XF0017</div><div class="td" style="top:-1px;left:1008px;width:100px"><span class="sb" style="background:#19c864"><svg width="17" height="17" viewBox="0 0 17 17"><path d="M2.75 3.4 A7.3 7.3 0 0 1 14.25 3.4" fill="none" stroke="#fff" stroke-width="1.5" stroke-linecap="round"/><path d="M5.2 5.5 A4.3 4.3 0 0 1 11.8 5.5" fill="none" stroke="#fff" stroke-width="1.5" stroke-linecap="round"/><path d="M8.5 6.5 V9" stroke="#fff" stroke-width="1.5"/><rect x="1" y="8.8" width="15" height="6.6" rx="1.3" fill="none" stroke="#fff" stroke-width="1.5"/><rect x="3.6" y="11.5" width="1.8" height="1.3" fill="#fff"/><rect x="6.4" y="11.5" width="1.8" height="1.3" fill="#fff"/></svg><i>正常</i></span></div><div class="td" style="top:-1px;left:1108px;width:100px"><span class="vb">查看</span></div><div class="td" style="top:-1px;left:1208px;width:100px"><span class="vb">查看</span></div></div>
<div class="tr" style="top:572px;height:45px;color:#666"><div class="td" style="top:-1px;left:-1px;width:132px">8楼</div><div class="td" style="top:-1px;left:131px;width:129px">二</div><div class="td" style="top:-1px;left:260px;width:160px">ASCP200-20D</div><div class="td" style="top:-1px;left:420px;width:130px">探测器4-1</div><div class="td" style="top:-1px;left:550px;width:129px">17</div><div class="td" style="top:-1px;left:679px;width:200px"></div><div class="td" style="top:-1px;left:879px;width:129px">XF0018</div><div class="td" style="top:-1px;left:1008px;width:100px"><span class="sb" style="background:#9a9a9a"><svg width="17" height="17" viewBox="0 0 17 17"><path d="M2.75 3.4 A7.3 7.3 0 0 1 14.25 3.4" fill="none" stroke="#fff" stroke-width="1.5" stroke-linecap="round"/><path d="M5.2 5.5 A4.3 4.3 0 0 1 11.8 5.5" fill="none" stroke="#fff" stroke-width="1.5" stroke-linecap="round"/><path d="M8.5 6.5 V9" stroke="#fff" stroke-width="1.5"/><rect x="1" y="8.8" width="15" height="6.6" rx="1.3" fill="none" stroke="#fff" stroke-width="1.5"/><rect x="3.6" y="11.5" width="1.8" height="1.3" fill="#fff"/><rect x="6.4" y="11.5" width="1.8" height="1.3" fill="#fff"/></svg><i>离线</i></span></div><div class="td" style="top:-1px;left:1108px;width:100px"><span class="vb">查看</span></div><div class="td" style="top:-1px;left:1208px;width:100px"><span class="vb">查看</span></div></div>
<div class="tr" style="top:617px;height:45px;color:#666"><div class="td" style="top:-1px;left:-1px;width:132px">闭挂</div><div class="td" style="top:-1px;left:131px;width:129px"></div><div class="td" style="top:-1px;left:260px;width:160px">ASCP200-40B</div><div class="td" style="top:-1px;left:420px;width:130px">探测器4-2</div><div class="td" style="top:-1px;left:550px;width:129px">17</div><div class="td" style="top:-1px;left:679px;width:200px"></div><div class="td" style="top:-1px;left:879px;width:129px">XF0019</div><div class="td" style="top:-1px;left:1008px;width:100px"><span class="sb" style="background:#9a9a9a"><svg width="17" height="17" viewBox="0 0 17 17"><path d="M2.75 3.4 A7.3 7.3 0 0 1 14.25 3.4" fill="none" stroke="#fff" stroke-width="1.5" stroke-linecap="round"/><path d="M5.2 5.5 A4.3 4.3 0 0 1 11.8 5.5" fill="none" stroke="#fff" stroke-width="1.5" stroke-linecap="round"/><path d="M8.5 6.5 V9" stroke="#fff" stroke-width="1.5"/><rect x="1" y="8.8" width="15" height="6.6" rx="1.3" fill="none" stroke="#fff" stroke-width="1.5"/><rect x="3.6" y="11.5" width="1.8" height="1.3" fill="#fff"/><rect x="6.4" y="11.5" width="1.8" height="1.3" fill="#fff"/></svg><i>离线</i></span></div><div class="td" style="top:-1px;left:1108px;width:100px"><span class="vb">查看</span></div><div class="td" style="top:-1px;left:1208px;width:100px"><span class="vb">查看</span></div></div>
<div class="vl" style="left:131px"></div><div class="vl" style="left:260px"></div><div class="vl" style="left:420px"></div><div class="vl" style="left:550px"></div><div class="vl" style="left:679px"></div><div class="vl" style="left:879px"></div><div class="vl" style="left:1008px"></div><div class="vl" style="left:1108px"></div><div class="vl" style="left:1208px"></div>
  <div id="sbar"><div id="thumb"></div></div>
 </div>

 <div class="st" style="left:25px">探测器状态统计</div>
 <div class="st" style="left:152px">正常:</div><div class="st n" style="left:200px;color:#00e000">8</div>
 <div class="st" style="left:224px">离线:</div><div class="st n" style="left:272px;color:#999">6</div>
 <div class="st" style="left:296px">报警:</div><div class="st n" style="left:343px;color:#ff3333">0</div>
 <div class="st" style="left:368px">故障:</div><div class="st n" style="left:416px;color:#ff9a3a">1</div>
 <div id="total">共 15 条</div>
 <div id="wm1"><span style="font-size:19px">激活</span> Windows</div>
 <div id="wm2"><span style="font-size:15px">转到“设置”以激活</span> Windows。</div>
</div>
</body></html>
